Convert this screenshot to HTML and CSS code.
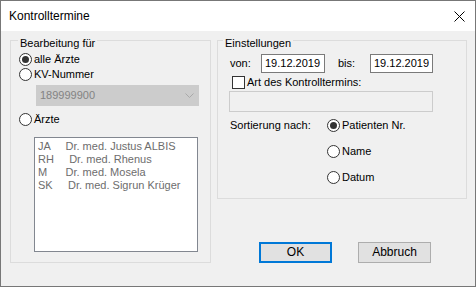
FILE: index.html
```html
<!DOCTYPE html>
<html>
<head>
<meta charset="utf-8">
<link rel="stylesheet" href="styles.css">
</head>
<body>
<div class="window">
  <div class="titlebar">
    <span class="title">Kontrolltermine</span>
    <svg class="close" width="11" height="11" viewBox="0 0 11 11"><path d="M0.5 0.5 L10.5 10.5 M10.5 0.5 L0.5 10.5" stroke="#000" stroke-width="1" fill="none"/></svg>
  </div>
  <div class="client">
    <div class="group group-left">
      <div class="group-title">Bearbeitung für</div>
      <div class="radio-row row-alle"><span class="radio checked"></span><span class="lbl">alle Ärzte</span></div>
      <div class="radio-row row-kv"><span class="radio"></span><span class="lbl">KV-Nummer</span></div>
      <div class="combo">
        <span class="combo-text">189999900</span>
        <svg class="chev" width="9" height="5" viewBox="0 0 9 5"><path d="M0.5 0.5 L4.5 4.5 L8.5 0.5" stroke="#a9a9a9" stroke-width="1" fill="none"/></svg>
      </div>
      <div class="radio-row row-aerzte"><span class="radio"></span><span class="lbl">Ärzte</span></div>
      <div class="listbox">
        <div class="item">JA     Dr. med. Justus ALBIS</div>
        <div class="item">RH     Dr. med. Rhenus</div>
        <div class="item">M      Dr. med. Mosela</div>
        <div class="item">SK     Dr. med. Sigrun Krüger</div>
      </div>
    </div>
    <div class="right-col">
      <div class="group group-right">
        <div class="group-title">Einstellungen</div>
        <div class="date-row">
          <span class="date-lbl">von:</span>
          <span class="datebox d1">19.12.2019</span>
          <span class="date-lbl bis">bis:</span>
          <span class="datebox d2">19.12.2019</span>
        </div>
        <div class="check-row"><span class="checkbox"></span><span class="lbl">Art des Kontrolltermins:</span></div>
        <div class="textbox-disabled"></div>
        <div class="sort">
          <span class="sort-lbl">Sortierung nach:</span>
          <div class="sort-opts">
            <div class="radio-row"><span class="radio checked"></span><span class="lbl">Patienten Nr.</span></div>
            <div class="radio-row"><span class="radio"></span><span class="lbl">Name</span></div>
            <div class="radio-row"><span class="radio"></span><span class="lbl">Datum</span></div>
          </div>
        </div>
      </div>
      <div class="buttons">
        <div class="btn btn-default">OK</div>
        <div class="btn">Abbruch</div>
      </div>
    </div>
  </div>
</div>
</body>
</html>
```
FILE: styles.css
```css
* { box-sizing: border-box; }
html, body { margin: 0; padding: 0; background: #fff; }
body {
  font-family: "Liberation Sans", Arial, sans-serif;
  font-size: 11px;
  line-height: 13px;
  color: #000;
}
.window {
  width: 476px;
  height: 287px;
  border: 1px solid #777;
  display: flex;
  flex-direction: column;
}
.titlebar {
  height: 30px;
  background: #fff;
  display: flex;
  align-items: center;
  justify-content: space-between;
  padding: 0 10px 0 8px;
}
.title {
  font-size: 12px;
  line-height: 16px;
}
.close { display: block; }
.client {
  flex: 1;
  background: #f0f0f0;
  padding: 9px 0 0 9px;
  display: flex;
  gap: 6px;
}
.group {
  border: 1px solid #dcdcdc;
}
.group-title {
  margin-top: -4px;
  margin-left: 7px;
  padding: 0 2px;
  width: fit-content;
  background: #f0f0f0;
  height: 13px;
}
.group-left {
  width: 201px;
  height: 223px;
}
.radio-row {
  display: flex;
  align-items: center;
  height: 13px;
}
.group-left .radio-row { padding-left: 8px; }
.radio {
  width: 13px;
  height: 13px;
  border: 1px solid #333;
  border-radius: 50%;
  background: #fff;
  flex: none;
  display: flex;
  align-items: center;
  justify-content: center;
}
.radio.checked::after {
  content: "";
  width: 7px;
  height: 7px;
  border-radius: 50%;
  background: #333;
}
.lbl { margin-left: 2px; white-space: nowrap; }
.row-alle { margin-top: 3px; }
.row-kv { margin-top: 2px; }
.combo {
  margin: 4px 0 0 25px;
  width: 163px;
  height: 21px;
  background: #cccccc;
  border: 1px solid #cccccc;
  display: flex;
  align-items: center;
  justify-content: space-between;
  padding: 0 4px 0 3px;
  color: #838383;
}
.chev { display: block; }
.row-aerzte { margin-top: 7px; }
.listbox {
  margin: 11px 0 0 23px;
  width: 164px;
  height: 115px;
  background: #fff;
  border: 1px solid #828790;
  padding: 2px 0 0 3px;
  color: #6d6d6d;
}
.item { white-space: pre; height: 13px; }
.right-col {
  width: 250px;
  display: flex;
  flex-direction: column;
}
.group-right {
  height: 159px;
}
.group-right .group-title { margin-left: 5px; }
.date-row {
  margin-top: 4px;
  display: flex;
  align-items: center;
  height: 19px;
  padding-left: 12px;
}
.date-lbl { width: 31px; }
.date-lbl.bis { margin-left: 13px; width: 32px; }
.datebox {
  height: 19px;
  background: #fff;
  border: 1px solid #7a7a7a;
  padding: 0 0 0 3px;
  line-height: 17px;
}
.d1 { width: 64px; }
.d2 { width: 63px; }
.check-row {
  margin-top: 3px;
  display: flex;
  align-items: center;
  height: 13px;
  padding-left: 14px;
}
.checkbox {
  width: 13px;
  height: 13px;
  border: 1px solid #333;
  background: #fff;
  flex: none;
}
.check-row .lbl { margin-left: 2px; }
.textbox-disabled {
  margin: 2px 0 0 11px;
  width: 204px;
  height: 21px;
  border: 1px solid #cccccc;
  background: #f0f0f0;
}
.sort {
  margin-top: 7px;
  display: flex;
  padding-left: 12px;
}
.sort-lbl { width: 97px; height: 13px; }
.sort-opts {
  display: flex;
  flex-direction: column;
  gap: 13px;
}
.buttons {
  margin-top: 43px;
  padding-left: 42px;
  display: flex;
  gap: 26px;
}
.btn {
  width: 73px;
  height: 21px;
  background: #e1e1e1;
  border: 1px solid #adadad;
  display: flex;
  align-items: center;
  justify-content: center;
  font-size: 12px;
}
.btn-default { border: 2px solid #0078d7; }
```
